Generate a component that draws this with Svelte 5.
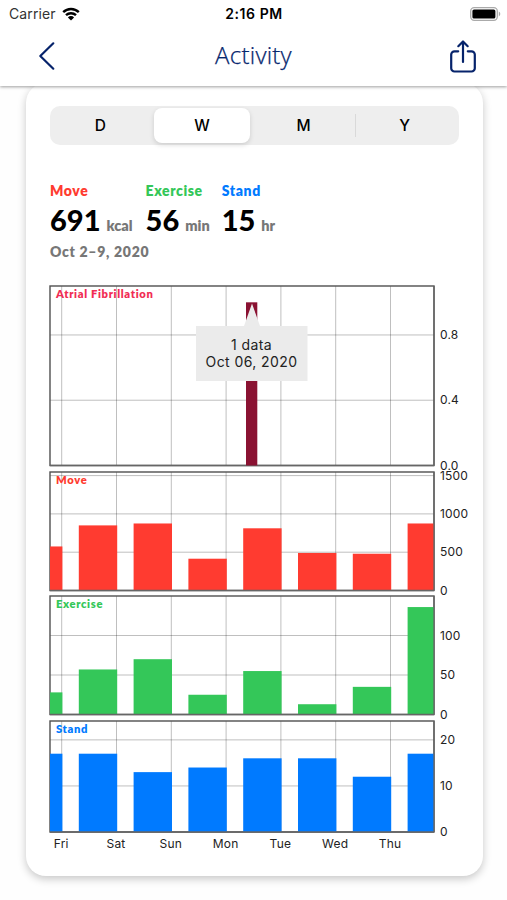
<script lang="ts">
	type Chart = {
		name: string;
		color: string;
		labelColor: string;
		height: number;
		max: number;
		ticks: { value: number; label: string }[];
		values: number[];
	};

	const plotWidth = 384;
	const days = ['Fri', 'Sat', 'Sun', 'Mon', 'Tue', 'Wed', 'Thu'];
	const dayX = (i: number) => 11.7 + i * 54.8;
	const ranges = ['D', 'W', 'M', 'Y'];
	let selected = $state('W');

	const totals = [
		{ name: 'Move', value: '691', unit: 'kcal', kind: 'move' },
		{ name: 'Exercise', value: '56', unit: 'min', kind: 'exercise' },
		{ name: 'Stand', value: '15', unit: 'hr', kind: 'stand' }
	];

	const charts: Chart[] = [
		{
			name: 'Atrial Fibrillation',
			color: '#8a1232',
			labelColor: '#f12d55',
			height: 179.5,
			max: 1.1,
			ticks: [
				{ value: 0, label: '0.0' },
				{ value: 0.4, label: '0.4' },
				{ value: 0.8, label: '0.8' }
			],
			values: []
		},
		{
			name: 'Move',
			color: '#ff3b30',
			labelColor: '#ff3b30',
			height: 118.5,
			max: 1547,
			ticks: [
				{ value: 0, label: '0' },
				{ value: 500, label: '500' },
				{ value: 1000, label: '1000' },
				{ value: 1500, label: '1500' }
			],
			values: [575, 850, 875, 415, 812, 490, 480, 875]
		},
		{
			name: 'Exercise',
			color: '#34c759',
			labelColor: '#34c759',
			height: 118.5,
			max: 150,
			ticks: [
				{ value: 0, label: '0' },
				{ value: 50, label: '50' },
				{ value: 100, label: '100' }
			],
			values: [28, 57, 70, 25, 55, 13, 35, 136]
		},
		{
			name: 'Stand',
			color: '#007aff',
			labelColor: '#007aff',
			height: 111,
			max: 24.1,
			ticks: [
				{ value: 0, label: '0' },
				{ value: 10, label: '10' },
				{ value: 20, label: '20' }
			],
			values: [17, 17, 13, 14, 16, 16, 12, 17]
		}
	];

	const y = (chart: Chart, value: number) => chart.height * (1 - value / chart.max);

	// the first and last bars are cut off by the plot edges
	function bar(i: number) {
		const right = Math.min(dayX(i) + 0.7, plotWidth);
		const left = Math.max(dayX(i) - 37.7, 0);
		return { left, width: right - left };
	}
</script>

<div class="screen">
	<header>
		<div class="status">
			<span class="carrier">
				Carrier
				<svg width="18" height="14" viewBox="0 0 18 14">
					<path d="M1.2 5.2a11.2 11.2 0 0 1 15.6 0" />
					<path d="M4 8.2a7.2 7.2 0 0 1 10 0" />
					<path class="dot" d="M9 13.5 5.9 10.4a4.4 4.4 0 0 1 6.2 0z" />
				</svg>
			</span>
			<span class="time">2:16 PM</span>
			<svg class="battery" width="31" height="14" viewBox="0 0 31 14">
				<rect x=".7" y=".7" width="26.6" height="12.6" rx="3.5" fill="#fff" stroke="#aaa" stroke-width="1.3" />
				<rect x="2.4" y="2.4" width="23" height="9.2" rx="1.6" />
				<path d="M28.8 4.6c2 1 2 3.8 0 4.8z" fill="#aaa" />
			</svg>
		</div>
		<nav>
			<button class="back" aria-label="Back">
				<svg width="16" height="28" viewBox="0 0 16 28">
					<path d="M14.3 1.3 1.3 14l13 12.7" />
				</svg>
			</button>
			<h1>Activity</h1>
			<button class="share" aria-label="Share">
				<svg width="26" height="33" viewBox="0 0 26 33">
					<path d="M8.2 11.3H4.5a3.3 3.3 0 0 0-3.3 3.3v13.6a3.3 3.3 0 0 0 3.3 3.3h17a3.3 3.3 0 0 0 3.3-3.3V14.6a3.3 3.3 0 0 0-3.3-3.3h-3.7" />
					<path d="M13 22V1.8M8.3 6.2 13 1.5l4.7 4.7" />
				</svg>
			</button>
		</nav>
	</header>

	<main>
		<section class="card">
			<div class="segments">
				{#each ranges as range (range)}
					<button
						class:selected={selected === range}
						class:divided={range === 'Y' && selected === 'W'}
						onclick={() => (selected = range)}
					>
						{range}
					</button>
				{/each}
			</div>

			<div class="totals">
				{#each totals as total (total.name)}
					<div class="total {total.kind}">
						<div class="name">{total.name}</div>
						<div class="amount"><b>{total.value}</b><span>{total.unit}</span></div>
					</div>
				{/each}
			</div>
			<div class="period">Oct 2–9, 2020</div>

			<div class="charts">
				{#each charts as chart, index (chart.name)}
					<svg width="430" height={chart.height} viewBox="0 0 430 {chart.height}">
						{#each days as day, i (day)}
							<line class="grid" x1={dayX(i)} x2={dayX(i)} y1="0" y2={chart.height} />
						{/each}
						{#each chart.ticks as tick (tick.value)}
							<line class="grid" x1="0" x2={plotWidth} y1={y(chart, tick.value)} y2={y(chart, tick.value)} />
							<text class="tick" x="390" y={y(chart, tick.value) + 4}>{tick.label}</text>
						{/each}
						<rect class="frame" x="0" y="0" width={plotWidth} height={chart.height} />
						{#each chart.values as value, i (i)}
							<rect
								x={bar(i).left}
								y={y(chart, value)}
								width={bar(i).width}
								height={chart.height - y(chart, value)}
								fill={chart.color}
							/>
						{/each}
						<line class="base" x1="0" x2={plotWidth} y1={chart.height} y2={chart.height} />
						<line class="base" x1={plotWidth} x2={plotWidth} y1="0" y2={chart.height} />
						<text class="label" x="6" y="12.3" fill={chart.labelColor}>{chart.name}</text>
						{#if index === 0}
							<rect x="196" y={y(chart, 1)} width="11.3" height={chart.height - y(chart, 1)} fill={chart.color} />
							<path class="tip" d="M146 40h48l8-22.5 8 22.5h47.5v55H146z" />
							<text class="tip-text" x="201.5" y="63.5">1 data</text>
							<text class="tip-text" x="201.5" y="81">Oct 06, 2020</text>
						{/if}
					</svg>
				{/each}
			</div>
			<svg class="days" width="430" height="20" viewBox="0 0 430 20">
				{#each days as day, i (day)}
					<text x={dayX(i) - 0.5} y="14">{day}</text>
				{/each}
			</svg>
		</section>
	</main>
</div>

<style>
	:global(body) {
		margin: 0;
		background: #fff;
	}

	.screen {
		height: 900px;
		overflow: hidden;
		display: flex;
		flex-direction: column;
		font-family: Inter, 'Liberation Sans', sans-serif;
		color: #000;
		background: #fefefe;
	}

	button {
		padding: 0;
		border: 0;
		background: none;
		font: inherit;
		color: inherit;
	}

	svg {
		display: block;
		overflow: visible;
	}

	header {
		flex: none;
		box-sizing: border-box;
		height: 86px;
		background: #fff;
		box-shadow: 0 1px 3px rgba(0, 0, 0, 0.38);
		z-index: 1;
	}

	.status {
		display: grid;
		grid-template-columns: 1fr auto 1fr;
		align-items: center;
		height: 27px;
		padding: 0 8px 0 9px;
		font-size: 14px;
	}

	.carrier {
		display: flex;
		align-items: center;
		gap: 6px;
		color: #333;
		letter-spacing: 0.1px;
	}

	.carrier path {
		fill: none;
		stroke: #000;
		stroke-width: 2.4;
	}

	.carrier .dot {
		fill: #000;
		stroke: none;
	}

	.time {
		font-weight: 600;
		letter-spacing: 0.55px;
	}

	.battery {
		justify-self: end;
		margin-right: -2px;
	}

	nav {
		display: grid;
		grid-template-columns: 1fr auto 1fr;
		align-items: center;
		height: 58px;
		padding: 0 31px 0 39px;
	}

	nav path {
		fill: none;
		stroke: #06236b;
		stroke-width: 2.2;
		stroke-linecap: round;
		stroke-linejoin: round;
	}

	.share {
		justify-self: end;
	}

	h1 {
		margin: 0 8px 2px 0;
		font: 300 24px/30px 'Open Sans', sans-serif;
		letter-spacing: 0.25px;
		color: #06276e;
		-webkit-text-stroke: 0.25px #06276e;
	}

	main {
		flex: 1;
		padding: 0 24px 0 25.5px;
	}

	.card {
		box-sizing: border-box;
		height: 793px;
		margin-top: -3px;
		padding: 23px 24.5px 0;
		border-radius: 20px;
		background: #fff;
		box-shadow: 0 3px 9px rgba(0, 0, 0, 0.22);
	}

	.segments {
		display: grid;
		grid-template-columns: repeat(4, 1fr);
		box-sizing: border-box;
		height: 39px;
		padding: 2px 2px 2px 0;
		border-radius: 10px;
		background: #eee;
		font-size: 15.5px;
		font-weight: 500;
	}

	.segments button {
		margin: 0 3px 0 2px;
		border-radius: 8px;
	}

	.segments .selected {
		background: #fff;
		box-shadow: 0 2px 5px rgba(0, 0, 0, 0.14);
	}

	.segments .divided {
		margin: 0 2px 0 0;
		border-radius: 0;
		background: linear-gradient(#d9d9d9, #d9d9d9) left center / 1px 23px no-repeat;
	}

	.totals,
	.period {
		font-family: Lato, sans-serif;
		font-weight: 800;
	}

	.totals {
		display: flex;
		gap: 13px;
		padding-top: 36.5px;
	}

	.name {
		font-size: 14px;
		line-height: 18px;
		letter-spacing: 0.6px;
	}

	.move .name {
		color: #ff3b30;
	}

	.exercise .name {
		color: #34c759;
	}

	.stand .name {
		color: #007aff;
	}

	.stand {
		margin-left: -1px;
	}

	.amount {
		display: flex;
		align-items: baseline;
		gap: 6px;
		line-height: 40px;
	}

	.amount b {
		font-size: 29px;
		font-weight: 900;
	}

	.amount span {
		font-size: 14.5px;
		color: #777;
	}

	.period {
		margin-top: -3px;
		font-size: 14px;
		line-height: 18px;
		letter-spacing: 0.7px;
		color: #777;
	}

	.charts {
		display: flex;
		flex-direction: column;
		gap: 6px;
		margin-top: 25.5px;
	}

	.grid {
		stroke: #000;
		stroke-opacity: 0.25;
	}

	.frame {
		fill: none;
		stroke: #505050;
		stroke-width: 1.4;
	}

	.base {
		stroke: #666;
		stroke-width: 1.3;
	}

	.label {
		font: 800 11.2px Lato, sans-serif;
		letter-spacing: 0.65px;
	}

	.tick,
	.days text {
		font-size: 12px;
		letter-spacing: 0.2px;
		fill: #222;
	}

	.days {
		margin-top: 2.5px;
	}

	.days text,
	.tip-text {
		text-anchor: middle;
	}

	.tip {
		fill: #ebebeb;
	}

	.tip-text {
		font-size: 14px;
		letter-spacing: 0.4px;
		fill: #222;
	}
</style>
